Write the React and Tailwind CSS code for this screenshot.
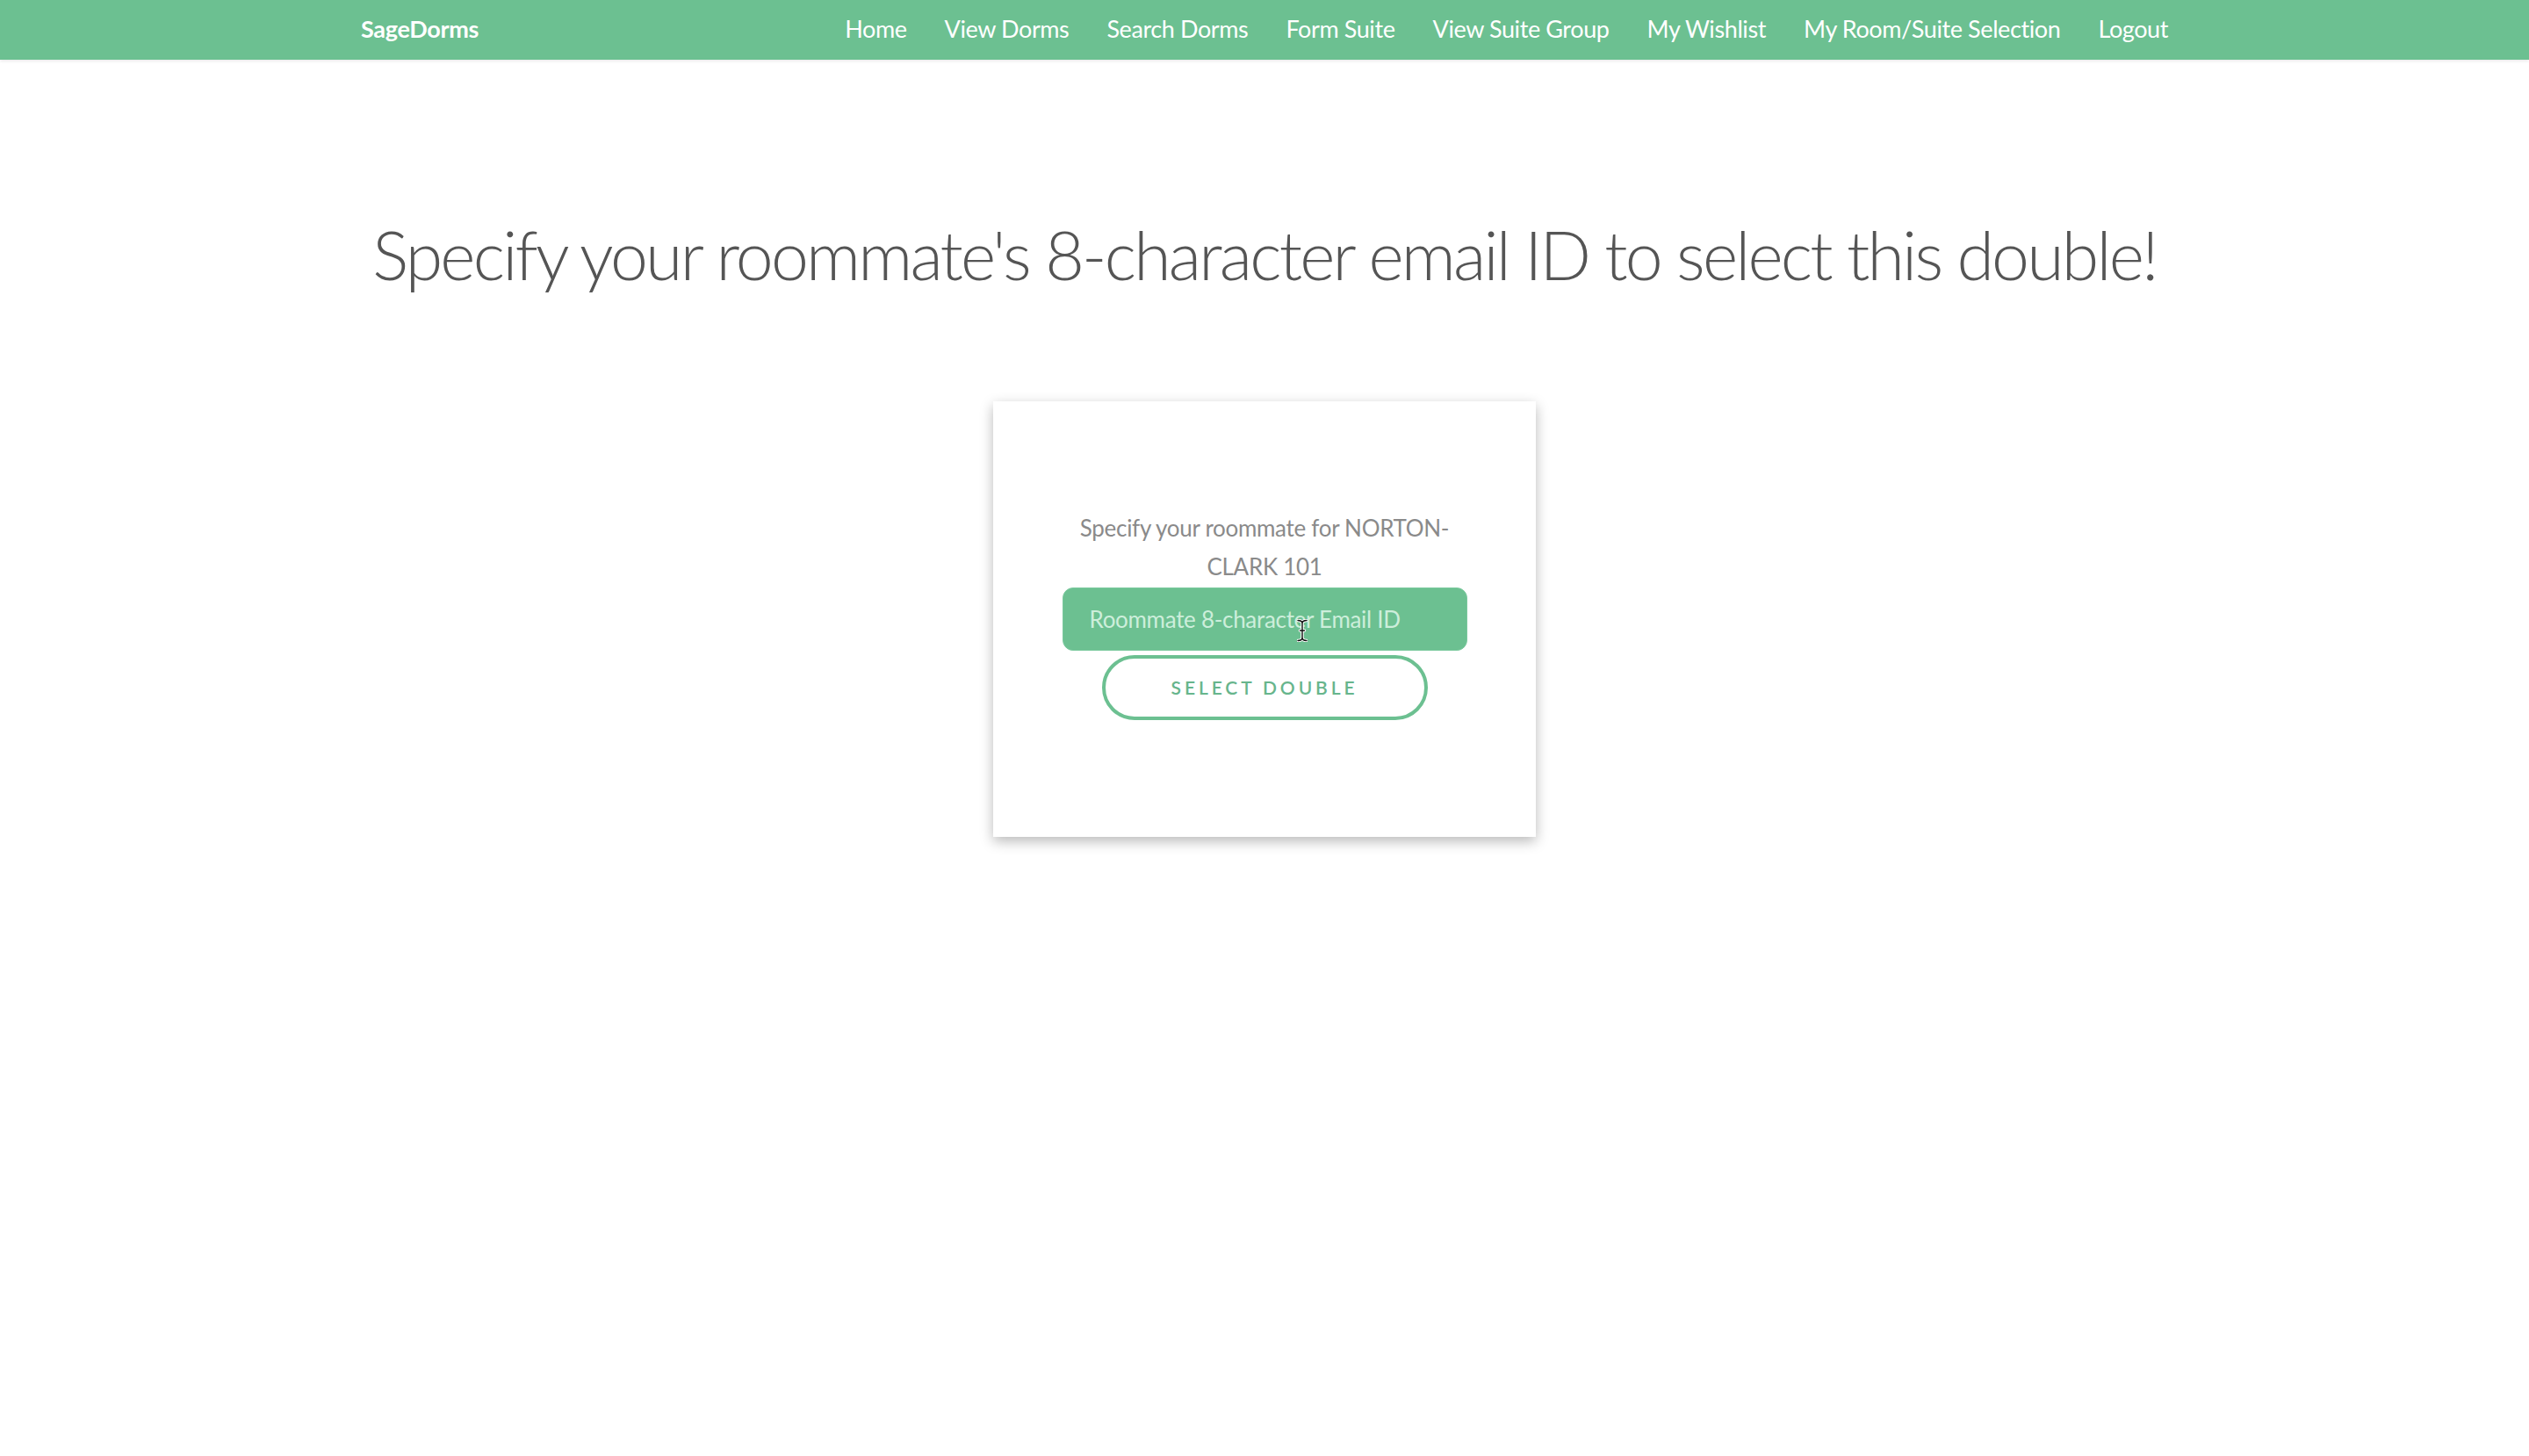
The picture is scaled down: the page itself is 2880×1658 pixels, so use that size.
const links = [
  "Home",
  "View Dorms",
  "Search Dorms",
  "Form Suite",
  "View Suite Group",
  "My Wishlist",
  "My Room/Suite Selection",
  "Logout",
];

function Navbar() {
  return (
    <nav className="w-full h-[68px] bg-[#6cc091] shadow-[0_2px_3px_rgba(0,0,0,0.08)]">
      <div className="mx-auto w-[2058px] h-full flex items-center justify-between pb-[2px]">
        <a className="text-white font-bold text-[27px] tracking-[-0.3px]" href="#">SageDorms</a>
        <ul className="flex items-center gap-[43px]">
          {links.map((l) => (
            <li key={l} className="text-white text-[27px] tracking-[-0.4px]">
              <a href="#">{l}</a>
            </li>
          ))}
        </ul>
      </div>
    </nav>
  );
}

function IBeam() {
  return (
    <svg className="absolute left-[267px] top-[36px]" width="12" height="26" viewBox="0 0 12 26">
      <path d="M1 1.5 Q6 1.5 6 5 Q6 1.5 11 1.5 M6 5 V21 M1 24.5 Q6 24.5 6 21 Q6 24.5 11 24.5 M3.5 13 H8.5" stroke="#fff" strokeWidth="3.5" fill="none" strokeLinecap="round" />
      <path d="M1 1.5 Q6 1.5 6 5 Q6 1.5 11 1.5 M6 5 V21 M1 24.5 Q6 24.5 6 21 Q6 24.5 11 24.5 M3.5 13 H8.5" stroke="#111" strokeWidth="1.4" fill="none" strokeLinecap="round" />
    </svg>
  );
}

function RoommateCard() {
  return (
    <div className="mx-auto w-[618px] h-[496px] bg-white shadow-[0_5px_14px_rgba(0,0,0,0.28)] flex flex-col items-center pt-[122px]">
      <p className="w-[461px] text-center text-[#8a8a8a] text-[26px] leading-[44px] tracking-[-0.3px]">
        Specify your roommate for NORTON-CLARK 101
      </p>
      <div className="relative mt-[2px]">
        <input
          type="text"
          placeholder="Roommate 8-character Email ID"
          className="w-[461px] h-[72px] rounded-[12px] bg-[#6cc091] px-[30px] text-[26px] text-white placeholder:text-[#cdeedb] outline-none tracking-[-0.3px] border border-[#7ac99d]"
        />
        <IBeam />
      </div>
      <button className="mt-[5px] w-[371px] h-[74px] rounded-full border-[4px] border-[#6cc091] bg-white text-[#67b58c] text-[21px] font-semibold tracking-[0.185em] uppercase">
        Select Double
      </button>
    </div>
  );
}

export default function App() {
  return (
    <div className="min-h-screen bg-white" style={{ fontFamily: "Lato, 'Open Sans', sans-serif" }}>
      <Navbar />
      <h1 className="mt-[166px] text-center text-[#555] text-[77px] font-light leading-[110px] tracking-[-2.8px]">
        Specify your roommate's 8-character email ID to select this double!
      </h1>
      <div className="mt-[113px]">
        <RoommateCard />
      </div>
    </div>
  );
}
